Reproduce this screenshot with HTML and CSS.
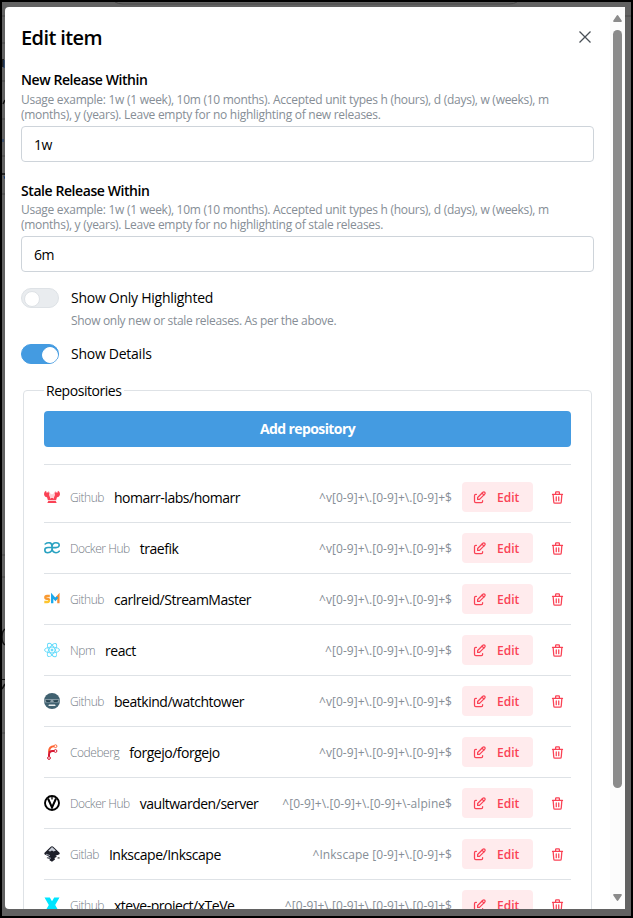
FILE: index.html
```html
<!DOCTYPE html>
<html lang="en">
<head>
<meta charset="utf-8">
<title>Edit item</title>
<link rel="stylesheet" href="styles.css">
</head>
<body>
<svg class="defs" width="0" height="0">
  <symbol id="edit" viewBox="0 0 24 24"><path d="M7 7H6a2 2 0 0 0-2 2v9a2 2 0 0 0 2 2h9a2 2 0 0 0 2-2v-1"/><path d="M20.385 6.585a2.1 2.1 0 0 0-2.97-2.97L9 12v3h3l8.385-8.415z"/><path d="M16 5l3 3"/></symbol>
  <symbol id="trash" viewBox="0 0 24 24"><path d="M4 7h16M10 11v6M14 11v6M5 7l1 12a2 2 0 0 0 2 2h8a2 2 0 0 0 2-2l1-12M9 7V4a1 1 0 0 1 1-1h4a1 1 0 0 1 1 1v3"/></symbol>
</svg>
<div class="window">
  <svg class="behind" viewBox="0 0 629 914" fill="none">
    <path d="M113 0q3 2 8 2h56M177 2h330q5 0 8-2M623 14h6M0 14h3M0 41h3M0 79h3M0 117h3M0 154h3M0 192h3M0 553h3M0 575h3M0 731h3" stroke="#484848"/>
    <path d="M1 57v8M1 102l2-4M0 172h3M3 627q-3 2-3 8t3 8M0 687l3-5" stroke="#111" stroke-width="1.500"/>
    <path d="M2 58v8M1 137v3M2 174l1 3" stroke="#173b70"/>
    <path d="M0 677.500h3" stroke="#111"/>
  </svg>
  <main class="modal">
    <div class="content">
      <header class="head">
        <h1>Edit item</h1>
        <svg class="close" viewBox="0 0 12 12"><path d="M.5.5l11 11M11.500.5l-11 11"/></svg>
      </header>
      <section class="field">
        <label class="name">New Release Within</label>
        <p class="hint">Usage example: 1w (1 week), 10m (10 months). Accepted unit types h (hours), d (days), w (weeks), m<br>(months), y (years). Leave empty for no highlighting of new releases.</p>
        <div class="input">1w</div>
      </section>
      <section class="field second">
        <label class="name">Stale Release Within</label>
        <p class="hint">Usage example: 1w (1 week), 10m (10 months). Accepted unit types h (hours), d (days), w (weeks), m<br>(months), y (years). Leave empty for no highlighting of stale releases.</p>
        <div class="input">6m</div>
      </section>
      <div class="switch"><i class="track"></i><span>Show Only Highlighted</span></div>
      <p class="switch-hint">Show only new or stale releases. As per the above.</p>
      <div class="switch"><i class="track on"></i><span>Show Details</span></div>
      <fieldset>
        <legend>Repositories</legend>
        <div class="add"><span>Add repository</span></div>
        <div class="list">
          <div class="row">
            <svg class="logo" viewBox="0 0 16 16"><path fill="#fa4255" d="M0 5Q0 2.500 2 1.800L2.800 4 4.300 2.800q1.500 1.200 1 3.200l1 3.500L8 8.500 9.700 9.500 10.700 6q-.5-2 1-3.200L13.200 4 14 1.800Q16 2.500 16 5 15.800 8 13 8.300l-.9 3H3.900L3 8.300Q.2 8 0 5zM4.300 12h7.400l1 2H3.300z"/><path d="M6.300 5.500L4.500 2.300M9.700 5.500l1.800-3.200" stroke="#fba0a9" stroke-width=".8"/><path d="M5.500 5.300h5l-.8 4.200L8 8.300 6.300 9.500z" fill="#fdd0d5"/></svg>
            <span class="host">Github</span><span class="repo">homarr-labs/homarr</span><span class="regex">^v[0-9]+\.[0-9]+\.[0-9]+$</span>
            <span class="edit"><svg><use href="#edit"/></svg><b>Edit</b></span><svg class="trash"><use href="#trash"/></svg>
          </div>
          <div class="row">
            <svg class="logo" viewBox="0 0 16 16" fill="none" stroke="#2aa2c1" stroke-width="1.600" stroke-linecap="round"><path d="M1.200 4Q3 2.500 6 2.900q2 .4 2 4M7.500 7.500H4Q.8 7.500.8 10q0 2.700 3 2.700 4.700 0 4.200-5.500Q8 2.800 12 2.800q3.300 0 3.200 2.500Q15 7.600 12 7.600H8q0 5.100 4 5.100 2 0 3.200-1.500"/></svg>
            <span class="host">Docker Hub</span><span class="repo">traefik</span><span class="regex">^v[0-9]+\.[0-9]+\.[0-9]+$</span>
            <span class="edit"><svg><use href="#edit"/></svg><b>Edit</b></span><svg class="trash"><use href="#trash"/></svg>
          </div>
          <div class="row">
            <svg class="logo" viewBox="0 0 16 16" fill="none" stroke-width="2.300"><path stroke="#fdc52e" d="M5 8.200Q5.500 11 3.300 11H.3"/><path stroke="#f99a32" d="M5.800 5H3Q1.300 5 1.300 6.500 1.300 7.800 3 7.900h.8q1.200 0 1.200 1"/><path stroke="#f58b32" d="M11.500 8.200L14.400 4.800V12.200"/><path stroke="#18a8ed" d="M8.200 12.200V4.800l3.200 3.600L13.400 6"/></svg>
            <span class="host">Github</span><span class="repo">carlreid/StreamMaster</span><span class="regex">^v[0-9]+\.[0-9]+\.[0-9]+$</span>
            <span class="edit"><svg><use href="#edit"/></svg><b>Edit</b></span><svg class="trash"><use href="#trash"/></svg>
          </div>
          <div class="row">
            <svg class="logo" viewBox="0 0 16 16" fill="none" stroke="#61dafb" stroke-width=".9"><ellipse cx="8" cy="8" rx="7.500" ry="2.900"/><ellipse cx="8" cy="8" rx="7.500" ry="2.900" transform="rotate(60 8 8)"/><ellipse cx="8" cy="8" rx="7.500" ry="2.900" transform="rotate(120 8 8)"/><circle cx="8" cy="8" r="1" fill="#61dafb"/></svg>
            <span class="host">Npm</span><span class="repo">react</span><span class="regex">^[0-9]+\.[0-9]+\.[0-9]+$</span>
            <span class="edit"><svg><use href="#edit"/></svg><b>Edit</b></span><svg class="trash"><use href="#trash"/></svg>
          </div>
          <div class="row">
            <svg class="logo" viewBox="0 0 16 16"><circle cx="8" cy="8" r="8" fill="#406170"/><path d="M.3 6.300Q8 5.500 15.700 6.300L15.500 9.500H.5z" fill="#8da0aa"/><path d="M1.500 7l5.500.3-1 1.700H2.500zM14.500 7L9 7.300l1 1.700h3.500z" fill="#294653"/><path d="M5 11.500h6l.7 1.500H4.300z" fill="#e8eef0"/></svg>
            <span class="host">Github</span><span class="repo">beatkind/watchtower</span><span class="regex">^v[0-9]+\.[0-9]+\.[0-9]+$</span>
            <span class="edit"><svg><use href="#edit"/></svg><b>Edit</b></span><svg class="trash"><use href="#trash"/></svg>
          </div>
          <div class="row">
            <svg class="logo" viewBox="0 0 16 16" fill="none"><path d="M5 8.500V8q0-5.800 5-5.800" stroke="#ff6533" stroke-width="2"/><path d="M5 13v-2.500q0-3.500 3.500-3.500H10" stroke="#d71932" stroke-width="2"/><circle cx="11.500" cy="2.200" r="1.400" stroke="#ff6533"/><circle cx="11.500" cy="7" r="1.400" stroke="#d71932"/><circle cx="5" cy="14" r="1.400" stroke="#d71932" fill="#fff"/></svg>
            <span class="host">Codeberg</span><span class="repo">forgejo/forgejo</span><span class="regex">^v[0-9]+\.[0-9]+\.[0-9]+$</span>
            <span class="edit"><svg><use href="#edit"/></svg><b>Edit</b></span><svg class="trash"><use href="#trash"/></svg>
          </div>
          <div class="row">
            <svg class="logo" viewBox="0 0 16 16" fill="none" stroke="#000"><circle cx="8" cy="8" r="7" stroke-width="1.900"/><path d="M4 3.500L8 12.500l4-9" stroke-width="2"/><path d="M8 1v3.500" stroke-width="1.300"/></svg>
            <span class="host">Docker Hub</span><span class="repo">vaultwarden/server</span><span class="regex">^[0-9]+\.[0-9]+\.[0-9]+\-alpine$</span>
            <span class="edit"><svg><use href="#edit"/></svg><b>Edit</b></span><svg class="trash"><use href="#trash"/></svg>
          </div>
          <div class="row">
            <svg class="logo" viewBox="0 0 16 16"><path d="M8 .3q.8 0 1.500.8l5.800 5.400q1 1.200-.3 1.900l-3.500 1.400 1.500 1-2.500 1.200.5 1.500L8 15.700l-2.500-1.400.3-1.200-3.300-1.200L5 10.500.8 8.500Q-.2 7.500.8 6.500L6.500 1Q7.200.3 8 .3z" fill="#1d1f29"/><path d="M8 1L4.300 4.800l1.800.8L8 4.500l1.500 1 2.400-.9z" fill="#c6cbd5"/><path d="M4 11.500l3 .8M2 8.200l4 1.400" stroke="#9da3b0"/><ellipse cx="14.600" cy="11.900" rx="1.200" ry=".7" fill="#333"/></svg>
            <span class="host">Gitlab</span><span class="repo">Inkscape/Inkscape</span><span class="regex">^Inkscape [0-9]+\.[0-9]+$</span>
            <span class="edit"><svg><use href="#edit"/></svg><b>Edit</b></span><svg class="trash"><use href="#trash"/></svg>
          </div>
          <div class="row">
            <svg class="logo" viewBox="0 0 16 16"><path d="M.5.500h5.300L8 4.300l2.200-3.800h5.300L11.200 8l4.300 7.500h-5.300L8 11.700l-2.200 3.800H.5L4.800 8z" fill="#00e5ff"/></svg>
            <span class="host">Github</span><span class="repo">xteve-project/xTeVe</span><span class="regex">^[0-9]+\.[0-9]+\.[0-9]+\.[0-9]+$</span>
            <span class="edit"><svg><use href="#edit"/></svg><b>Edit</b></span><svg class="trash"><use href="#trash"/></svg>
          </div>
        </div>
      </fieldset>
    </div>
    <aside class="scroll">
      <svg viewBox="0 0 9 7"><path d="M4.500 0Q5 0 5.400.7L8.800 5.700Q9 7 8 7H1Q0 7 .2 5.700L3.600.7Q4 0 4.500 0z"/></svg>
      <div class="thumb"></div>
      <svg class="down" viewBox="0 0 9 7"><path d="M4.500 7Q5 7 5.400 6.300L8.800 1.300Q9 0 8 0H1Q0 0 .2 1.300L3.600 6.300Q4 7 4.500 7z"/></svg>
    </aside>
  </main>
</div>
</body>
</html>
```
FILE: styles.css
```css
* { box-sizing: border-box; }
body { margin: 0; font-family: "Open Sans", "Noto Sans", sans-serif; font-size: 14px; color: #000; overflow: hidden; }
.defs { position: absolute; }
.window { position: relative; width: 633px; height: 918px; border: 2px solid #000; background: #626262; padding: 5px 6px 7px 3px; }
.behind { position: absolute; left: 0; top: 0; width: 629px; height: 914px; }
.modal { position: relative; display: flex; width: 620px; height: 902px; background: #fff; border-radius: 4px 0 0 4px; overflow: hidden; }
.content { width: 605px; padding: 15px 16px 0; }
.head { display: flex; justify-content: space-between; height: 47px; }
h1 { margin: 0; font-size: 20px; line-height: 31px; font-weight: 600; letter-spacing: -.6px; }
.close { width: 12px; height: 12px; margin: 9px 3px 0 0; stroke: #495057; stroke-width: 1.3; fill: none; }
.field { height: 93px; white-space: nowrap; }
.second { margin-top: 18px; height: 92px; }
.name { display: block; height: 24px; line-height: 22px; font-weight: 600; letter-spacing: -.42px; }
.second .name { height: 23px; }
.hint { margin: 0 0 4px; height: 29px; font-size: 12px; line-height: 14.5px; color: #868e96; letter-spacing: -.277px; }
.input { height: 36px; border: 1px solid #ced4da; border-radius: 4px; padding-left: 12px; line-height: 35px; letter-spacing: -.4px; }
.switch { display: flex; height: 20px; margin-top: 16px; gap: 12px; line-height: 20px; letter-spacing: -.26px; }
.track { width: 38px; height: 20px; border: 1px solid #dee2e6; border-radius: 10px; background: #e9ecef; padding: 3px 2px; }
.track::before { content: ""; display: block; width: 14px; height: 14px; margin-top: -1px; border-radius: 50%; background: #fff; border: 1px solid #dee2e6; }
.track.on { background: #449be1; border-color: #449be1; }
.track.on::before { margin-left: 18px; border-color: #fff; }
.switch-hint { margin: 4px 0 -2px 50px; font-size: 12px; line-height: 18px; color: #868e96; letter-spacing: -.32px; }
fieldset { margin: 16px 2px 0; padding: 10px 20px 0; border: 1px solid #dee2e6; border-radius: 4px; height: 560px; }
legend { height: 21px; line-height: 22px; padding: 0 2px; letter-spacing: -.45px; }
.add { height: 36px; border-radius: 4px; background: #449be1; color: #fff; font-weight: 700; text-align: center; line-height: 36px; letter-spacing: -.6px; }
.list { margin-top: 17px; border-top: 1px solid #dee2e6; padding-top: 7px; }
.row { display: flex; align-items: center; height: 51px; border-bottom: 1px solid #dee2e6; white-space: nowrap; }
.logo { width: 16px; height: 16px; margin-right: 10px; }
.host { font-size: 12px; font-weight: 300; color: #757d86; margin-right: 10px; letter-spacing: -.45px; }
.repo { letter-spacing: -.48px; }
.regex { margin-left: auto; font-size: 12px; color: #868e96; margin-right: 10px; letter-spacing: .05px; }
.edit { display: flex; align-items: center; width: 71px; height: 30px; padding-left: 10px; border-radius: 4px; background: #ffebed; color: #fa4255; font-size: 12px; }
.edit svg { width: 15px; height: 15px; margin-right: 10px; }
.edit b { font-weight: 600; }
.edit svg, .trash { fill: none; stroke: #fa4255; stroke-width: 2; stroke-linecap: round; stroke-linejoin: round; }
.trash { width: 15px; height: 15px; margin: 0 6px 0 17px; }
.scroll { display: flex; flex-direction: column; align-items: center; width: 15px; padding: 8px 0; background: #fcfcfc; }
.scroll svg { width: 9px; height: 7px; fill: #8b8b8b; }
.thumb { width: 9px; height: 758px; margin-top: 8px; background: #8b8b8b; border-radius: 5px; }
.scroll .down { margin-top: auto; }
```
